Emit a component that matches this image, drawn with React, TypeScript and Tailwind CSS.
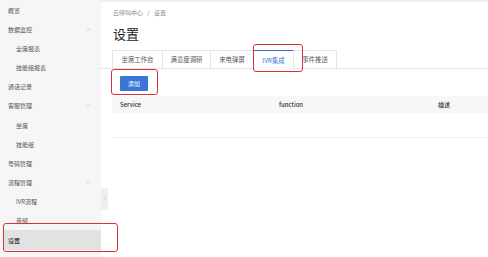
import React from 'react';
import { ChevronUp, ChevronLeft } from 'lucide-react';

const font = { fontFamily: '"Noto Sans CJK SC", "Liberation Sans", sans-serif' };

type NavItem = { label: string; sub?: boolean; open?: boolean; active?: boolean };

const nav: NavItem[] = [
  { label: '概览' },
  { label: '数据监控', open: true },
  { label: '全席报表', sub: true },
  { label: '技能组报表', sub: true },
  { label: '通话记录' },
  { label: '客服管理', open: true },
  { label: '坐席', sub: true },
  { label: '技能组', sub: true },
  { label: '号码管理' },
  { label: '流程管理', open: true },
  { label: 'IVR流程', sub: true },
  { label: '音频', sub: true },
  { label: '设置', active: true },
];

// widths measured off the screenshot
const tabs: { label: string; w: string }[] = [
  { label: '坐席工作台', w: 'w-[51px]' },
  { label: '满意度调研', w: 'w-[49px]' },
  { label: '来电弹屏', w: 'w-[44px]' },
  { label: 'IVR集成', w: 'w-[41px]' },
  { label: '事件推送', w: 'w-[44px]' },
];

export default function App() {
  return (
    <div className="flex w-[488px] h-[257px] overflow-hidden bg-white text-[#555]" style={font}>
      {/* sidebar */}
      <div className="relative w-[101px] shrink-0 bg-[#f6f6f6] pt-[0.5px]">
        {nav.map(item => (
          <div
            key={item.label}
            className={`flex items-center justify-between h-[19.17px] text-[6px] ${item.sub ? 'pl-[16px]' : 'pl-[8px]'} pr-[9px] ${
              item.active ? 'ml-[3px] !pl-[5px] h-[20px] bg-[#e2e2e2] text-[#333] font-medium' : ''
            }`}
          >
            <span>{item.label}</span>
            {item.open && <ChevronUp size={7} strokeWidth={1.5} className="text-[#aaa]" />}
          </div>
        ))}
        <div className="absolute left-[101px] top-[188px] w-[7px] h-[22px] bg-[#efefef] flex items-center justify-center">
          <ChevronLeft size={6} strokeWidth={1.5} className="text-[#aaa]" />
        </div>
        {/* annotation */}
        <div className="absolute left-[3px] top-[223px] w-[115px] h-[29px] border-[1.5px] border-[#d8323c] rounded-[3px]" />
      </div>

      {/* main */}
      <div className="relative flex-1 min-w-0">
        <div className="h-[3px] bg-gradient-to-b from-[#e9e9e9] to-white" />
        <div className="pl-[12px] pt-[5px] text-[6px] text-[#888]">
          云呼叫中心 <span className="mx-[3px]">/</span> 设置
        </div>
        <div className="pl-[12px] mt-[9px] text-[13px] leading-[16px] text-[#222]">设置</div>

        <div className="flex mt-[8px] pl-[11px] border-b border-[#e4e4e4] h-[19px]">
          {tabs.map(t => {
            const active = t.label === 'IVR集成';
            return (
              <div
                key={t.label}
                className={`${t.w} flex items-center justify-center text-[6.4px] border border-b-0 -mr-px ${
                  active ? 'border-[#e4e4e4] border-t-[#3a72d4] text-[#3a72d4] bg-white relative h-[20px]' : 'border-[#e4e4e4] text-[#555]'
                }`}
              >
                {t.label}
              </div>
            );
          })}
        </div>

        <div className="pl-[19px] mt-[7px]">
          <div className="w-[28px] h-[15px] bg-[#3b73d6] text-white text-[6px] flex items-center justify-center rounded-[1px]">添加</div>
        </div>

        <div className="ml-[11px] mt-[5px]">
          <div className="flex items-center h-[17px] bg-[#f7f7f7] text-[6px] text-[#333] font-medium">
            <span className="w-[167px] pl-[8px]">Service</span>
            <span className="w-[159px]">function</span>
            <span>描述</span>
          </div>
          <div className="h-[25px] border-b border-[#efefef]" />
        </div>

        {/* annotations */}
        <div className="absolute left-[152px] top-[44px] w-[50px] h-[28px] border-[1.5px] border-[#d8323c] rounded-[3px]" />
        <div className="absolute left-[10px] top-[69px] w-[47px] h-[26px] border-[1.5px] border-[#d8323c] rounded-[3px]" />
      </div>
    </div>
  );
}
